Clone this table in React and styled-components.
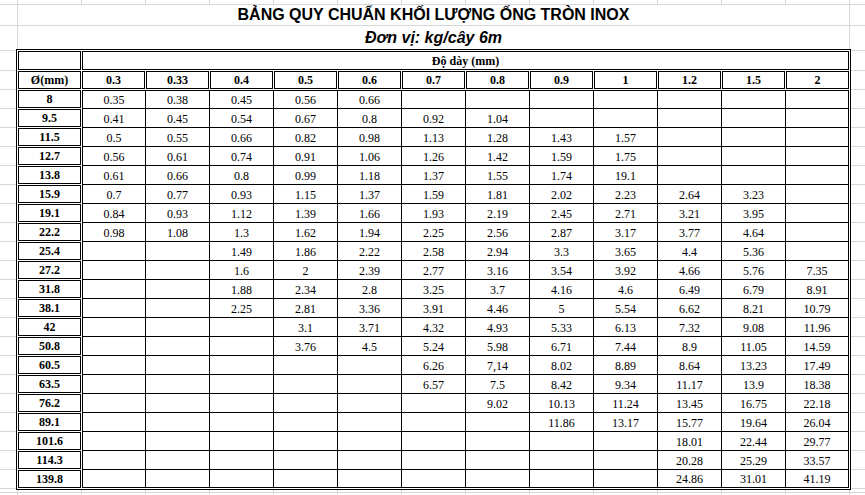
import styled, { createGlobalStyle } from "styled-components";

const GRID = "#d6d6d6";

const GlobalStyle = createGlobalStyle`
  html, body {
    margin: 0;
    padding: 0;
    background: #fff;
  }
  body {
    font-family: "Liberation Serif", "Times New Roman", serif;
  }
`;

// the worksheet with excel gridlines behind everything
const Sheet = styled.div`
  width: 865px;
  height: 495px;
  overflow: hidden;
  box-sizing: border-box;
  padding-top: 5px;
  background-color: #fff;
  background-image: linear-gradient(${GRID}, ${GRID}),
    linear-gradient(${GRID}, ${GRID}), linear-gradient(${GRID}, ${GRID}),
    linear-gradient(${GRID}, ${GRID}),
    repeating-linear-gradient(to bottom, ${GRID} 0 1px, transparent 1px 19px),
    linear-gradient(to right, ${GRID} 0 1px, transparent 1px);
  background-size: 100% 1px, 100% 1px, 100% 1px, 100% 1px, 100% 419px,
    64px 100%;
  background-position: 0 4px, 0 25px, 0 50px, 0 492px, 0 70px, 17px 0;
  background-repeat: no-repeat, no-repeat, no-repeat, no-repeat, no-repeat,
    repeat-x;
`;

// merged title cells (columns B..M)
const TitleBlock = styled.div`
  width: 831px;
  margin-left: 18px;
  background: #fff;
  font-family: "Liberation Sans", Arial, sans-serif;
  font-weight: bold;
  font-size: 16px;
  color: #000;
  text-align: center;
`;
const Title = styled.div`
  height: 20px;
  line-height: 20px;
`;
const Unit = styled.div`
  height: 23px;
  line-height: 23px;
  border-top: 1px solid ${GRID};
  font-style: italic;
`;

// the bordered table
const Table = styled.div`
  display: grid;
  grid-template-columns: repeat(13, 64px);
  grid-template-rows: 20px repeat(22, 19px);
  box-sizing: border-box;
  width: 835px;
  height: 441px;
  margin-left: 16px;
  border: 1px solid #000;
  background: #fff;
  font-size: 12px;
  color: #000;
`;

// header / label cell with a double border (boxed inside the gridlines)
const BoxCell = styled.div`
  grid-column: ${(p) => (p.$span ? `span ${p.$span}` : "auto")};
  margin: 1px 0 0 1px;
  border: 1px solid #000;
  display: flex;
  align-items: flex-end;
  justify-content: center;
  line-height: 15px;
  font-weight: bold;
  white-space: nowrap;
`;

// plain value cell with thin borders
const Cell = styled.div`
  margin-left: ${(p) => (p.$first ? "1px" : "0")};
  margin-top: ${(p) => (p.$top ? "1px" : "0")};
  border-left: 1px solid #000;
  border-top: 1px solid #000;
  border-right: ${(p) => (p.$last ? "1px solid #000" : "0")};
  border-bottom: ${(p) => (p.$bottom ? "1px solid #000" : "0")};
  display: flex;
  align-items: flex-end;
  justify-content: center;
  line-height: 15px;
  white-space: nowrap;
`;

const thickness = ["0.3", "0.33", "0.4", "0.5", "0.6", "0.7", "0.8", "0.9", "1", "1.2", "1.5", "2"];

// đường kính -> khối lượng theo độ dày, "" = ô trống
const rows = [
  ["8", ["0.35", "0.38", "0.45", "0.56", "0.66", "", "", "", "", "", "", ""]],
  ["9.5", ["0.41", "0.45", "0.54", "0.67", "0.8", "0.92", "1.04", "", "", "", "", ""]],
  ["11.5", ["0.5", "0.55", "0.66", "0.82", "0.98", "1.13", "1.28", "1.43", "1.57", "", "", ""]],
  ["12.7", ["0.56", "0.61", "0.74", "0.91", "1.06", "1.26", "1.42", "1.59", "1.75", "", "", ""]],
  ["13.8", ["0.61", "0.66", "0.8", "0.99", "1.18", "1.37", "1.55", "1.74", "19.1", "", "", ""]],
  ["15.9", ["0.7", "0.77", "0.93", "1.15", "1.37", "1.59", "1.81", "2.02", "2.23", "2.64", "3.23", ""]],
  ["19.1", ["0.84", "0.93", "1.12", "1.39", "1.66", "1.93", "2.19", "2.45", "2.71", "3.21", "3.95", ""]],
  ["22.2", ["0.98", "1.08", "1.3", "1.62", "1.94", "2.25", "2.56", "2.87", "3.17", "3.77", "4.64", ""]],
  ["25.4", ["", "", "1.49", "1.86", "2.22", "2.58", "2.94", "3.3", "3.65", "4.4", "5.36", ""]],
  ["27.2", ["", "", "1.6", "2", "2.39", "2.77", "3.16", "3.54", "3.92", "4.66", "5.76", "7.35"]],
  ["31.8", ["", "", "1.88", "2.34", "2.8", "3.25", "3.7", "4.16", "4.6", "6.49", "6.79", "8.91"]],
  ["38.1", ["", "", "2.25", "2.81", "3.36", "3.91", "4.46", "5", "5.54", "6.62", "8.21", "10.79"]],
  ["42", ["", "", "", "3.1", "3.71", "4.32", "4.93", "5.33", "6.13", "7.32", "9.08", "11.96"]],
  ["50.8", ["", "", "", "3.76", "4.5", "5.24", "5.98", "6.71", "7.44", "8.9", "11.05", "14.59"]],
  ["60.5", ["", "", "", "", "", "6.26", "7,14", "8.02", "8.89", "8.64", "13.23", "17.49"]],
  ["63.5", ["", "", "", "", "", "6.57", "7.5", "8.42", "9.34", "11.17", "13.9", "18.38"]],
  ["76.2", ["", "", "", "", "", "", "9.02", "10.13", "11.24", "13.45", "16.75", "22.18"]],
  ["89.1", ["", "", "", "", "", "", "", "11.86", "13.17", "15.77", "19.64", "26.04"]],
  ["101.6", ["", "", "", "", "", "", "", "", "", "18.01", "22.44", "29.77"]],
  ["114.3", ["", "", "", "", "", "", "", "", "", "20.28", "25.29", "33.57"]],
  ["139.8", ["", "", "", "", "", "", "", "", "", "24.86", "31.01", "41.19"]],
];

export default function App() {
  return (
    <>
      <GlobalStyle />
      <Sheet>
        <TitleBlock>
          <Title>BẢNG QUY CHUẨN KHỐI LƯỢNG ỐNG TRÒN INOX</Title>
          <Unit>Đơn vị: kg/cây 6m</Unit>
        </TitleBlock>
        <Table>
          <BoxCell />
          <BoxCell $span={12}>Độ dày (mm)</BoxCell>
          <BoxCell>Ø(mm)</BoxCell>
          {thickness.map((t) => (
            <BoxCell key={t}>{t}</BoxCell>
          ))}
          {rows.map(([size, values], r) => (
            <>
              <BoxCell key={size}>{size}</BoxCell>
              {values.map((v, c) => (
                <Cell
                  key={size + "-" + c}
                  $first={c === 0}
                  $top={r === 0}
                  $last={c === values.length - 1}
                  $bottom={r === rows.length - 1}
                >
                  {v}
                </Cell>
              ))}
            </>
          ))}
        </Table>
      </Sheet>
    </>
  );
}
